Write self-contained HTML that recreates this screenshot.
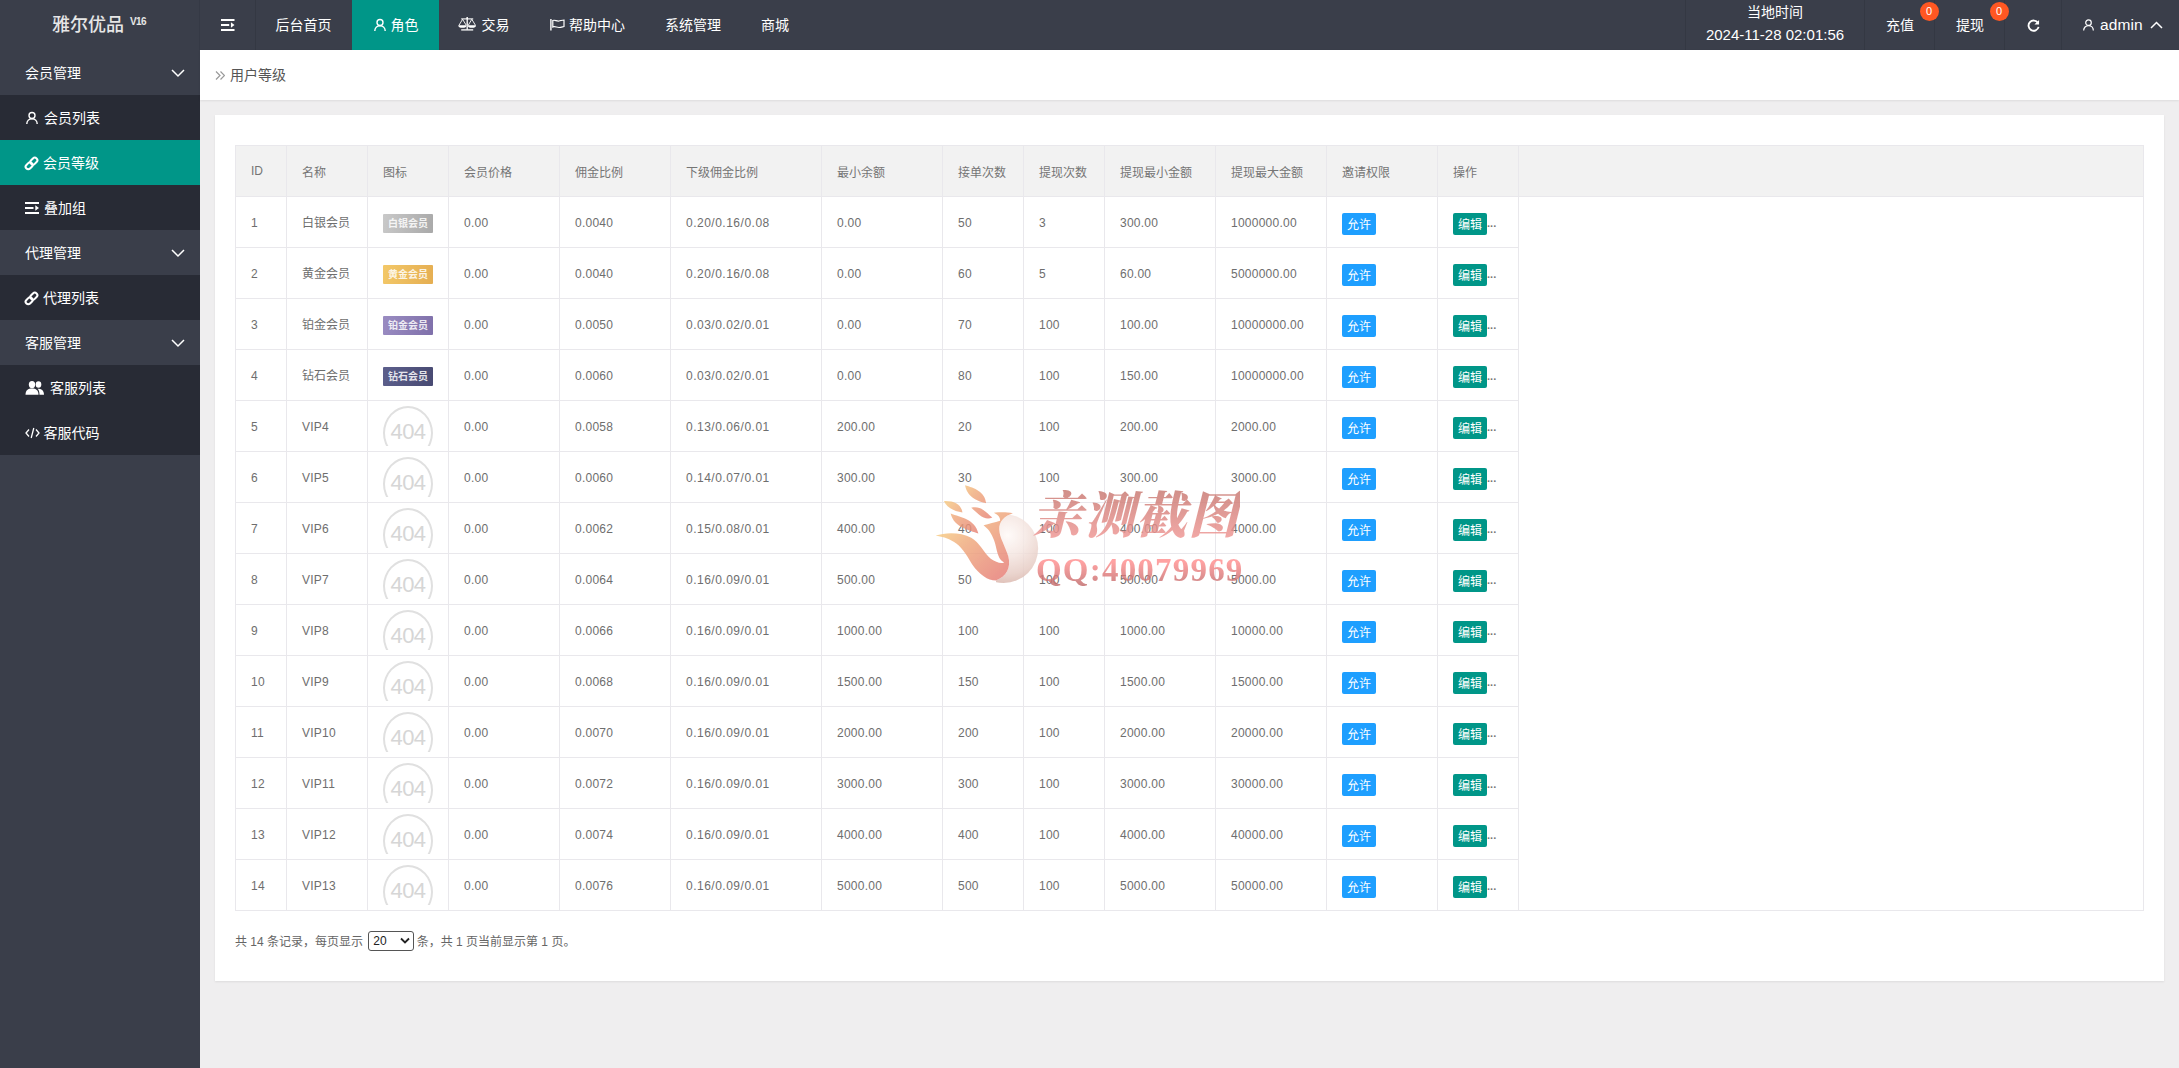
<!DOCTYPE html>
<html lang="zh-CN">
<head>
<meta charset="utf-8">
<title>用户等级</title>
<style>
*{box-sizing:border-box;margin:0;padding:0}
html,body{width:2179px;height:1068px;overflow:hidden}
body{font-family:"Liberation Sans","Noto Sans CJK SC",sans-serif;font-size:14px;color:#333;background:#efeeef;position:relative}
.header{position:absolute;left:0;top:0;width:2179px;height:50px;background:#3a3e4a;color:#fff}
.logo{position:absolute;left:0;top:0;width:200px;height:50px;line-height:51px;text-align:left;padding-left:52px;font-size:18px;font-weight:500;color:#e6e6e6;border-right:1px solid #353945;white-space:nowrap}
.logo sup{font-size:10px;position:relative;top:-6.500px;left:6px;vertical-align:baseline;font-weight:bold;letter-spacing:-0.6px}
.nav{position:absolute;top:0;height:50px;line-height:50px;text-align:center;color:#fff;font-size:14px;white-space:nowrap}
.nav.act{background:#009688}
.nav svg{vertical-align:middle;position:relative;top:-1px}
.sep{position:absolute;top:0;width:1px;height:50px;background:#343843}
.side{position:absolute;left:0;top:50px;width:200px;height:1018px;background:#3a3e4a}
.mi{position:relative;height:45px;line-height:47px;color:#fff;font-size:14px;padding-left:25px;white-space:nowrap}
.mi.sub{background:#282b35}
.mi.act{background:#009688}
.mi svg{vertical-align:middle;position:relative;top:-1px;margin-right:5px}
.mi .arr{position:absolute;right:15px;top:19px;margin:0}
.crumb{position:absolute;left:200px;top:50px;width:1979px;height:50px;background:#fff;line-height:50px;padding-left:30px;font-size:14px;color:#555;box-shadow:0 1px 2px rgba(0,0,0,.08)}
.crumb svg{position:absolute;left:15px;top:21px}
.card{position:absolute;left:215px;top:115px;width:1949px;height:866px;background:#fff;box-shadow:0 1px 2px rgba(0,0,0,.08)}
table{position:absolute;left:20px;top:30px;width:1909px;border-collapse:collapse;table-layout:fixed;font-size:12px;color:#6e6e6e}
th,td{height:51px;border:1px solid #e9e8ec;padding:0 15px;text-align:left;font-weight:normal;white-space:nowrap;overflow:hidden}
thead th{background:#f2f2f2;color:#757575}
td{padding-top:2px;letter-spacing:.25px}
td.sl{letter-spacing:.5px}
td.nm{padding-top:0;padding-bottom:1px;letter-spacing:0}
td.ic{padding:0 0 0 14px}
td.ic .bd{left:1px}
td.bt{padding:0 0 0 15px;letter-spacing:0}
td.last{border-top:0;border-bottom:0}
tbody tr:last-child td.last{border-bottom:1px solid #e9e8ec}
.bd{display:inline-block;width:50px;height:19px;line-height:19px;text-align:center;font-size:10px;color:rgba(255,255,255,.85);border-radius:1px;vertical-align:middle;position:relative;top:1px;font-weight:bold;letter-spacing:0}
.b1{background:linear-gradient(100deg,#c9c9c9,#a9a9a9)}
.b2{background:linear-gradient(100deg,#f3c868,#e5ae52)}
.b3{background:linear-gradient(100deg,#9a8cc2,#7f70aa)}
.b4{background:linear-gradient(100deg,#5c5f8c,#484a72)}
.btn{display:inline-block;height:22px;line-height:24px;padding:0 5px;font-size:12px;color:#fff;border-radius:2px;vertical-align:middle;position:relative;top:2px}
.btn.blue{background:#1e9fff}
.btn.green{background:#009688}
.dots{color:#777;position:relative;top:2px;left:0;font-size:11px;letter-spacing:0;font-weight:bold}
.e404{display:block;width:52px;height:50px;position:relative}
.e404 b{position:absolute;left:0;top:5px;width:52px;height:40px;overflow:hidden;display:block;font-weight:normal}
.e404 b:before{content:"";box-sizing:border-box;position:absolute;left:1px;top:0;width:50px;height:54px;border:2px solid #e0e0e0;border-radius:50%}
.e404 i{position:absolute;left:1px;top:11px;width:50px;text-align:center;font-style:normal;font-size:22px;color:#d6d6d6;line-height:30px;letter-spacing:-0.5px}
.pager{position:absolute;left:20px;top:816px;font-size:12px;color:#666;height:22px;line-height:22px;white-space:nowrap}
.sel{display:inline-block;vertical-align:middle;width:46px;height:20px;border:1px solid #555;border-radius:3px;background:#fff;color:#222;line-height:18px;padding-left:4px;position:relative;font-size:12px;margin:0 -1px 0 2px;top:-2px}
.sel svg{position:absolute;right:3px;top:5px}
.wm{position:absolute;left:920px;top:470px;width:350px;height:130px;opacity:.82;pointer-events:none}
.wm1{position:absolute;left:112px;top:16px;font-family:"Liberation Serif","Noto Serif CJK SC",serif;font-weight:900;font-style:italic;font-size:50px;line-height:60px;letter-spacing:2px;white-space:nowrap;background:linear-gradient(#c4746c,#f59a98);-webkit-background-clip:text;background-clip:text;color:transparent}
.wm2{position:absolute;left:116px;top:80px;font-family:"Liberation Serif",serif;font-weight:bold;font-size:33px;line-height:40px;letter-spacing:1.200px;white-space:nowrap;background:linear-gradient(#ff8e8e 30%,#c06a6a 90%);-webkit-background-clip:text;background-clip:text;color:transparent}
</style>
</head>
<body>
<div class="header">
  <div class="logo">雅尔优品<sup>V16</sup></div>
  <div class="nav" style="left:200.500px;width:55px"><svg width="13.500" height="12" viewBox="0 0 14 12" preserveAspectRatio="none"><path d="M0 1h14M0 6h8.500M0 11h14" stroke="#fff" stroke-width="2" fill="none"/><path d="M10.300 3.300l3.700 2.700-3.700 2.700z" fill="#fff"/></svg></div>
  <div class="sep" style="left:255px"></div>
  <div class="nav" style="left:255px;width:97px">后台首页</div>
  <div class="nav act" style="left:352px;width:87px"><svg width="14" height="14" viewBox="0 0 14 14"><circle cx="7" cy="4.5" r="3" stroke="#fff" stroke-width="1.4" fill="none"/><path d="M1.8 13c0-3.2 2.2-5.3 5.2-5.3s5.2 2.100 5.200 5.300" stroke="#fff" stroke-width="1.4" fill="none"/></svg> 角色</div>
  <div class="nav" style="left:439px;width:91px"><svg width="18" height="14" viewBox="0 0 18 14" style="left:-1.500px;top:-2px"><g stroke="#fff" fill="none"><path d="M9.200 0.800V12.800" stroke-width="1.300"/><path d="M3.200 1.900H15.200" stroke-width="1.100"/><path d="M3.200 12.900H15.200" stroke-width="1.300"/><path d="M1 8.200L4.600 2.300L8.200 8.200M10.300 8.200L13.800 2.300L17.400 8.200" stroke-width="0.900"/></g><circle cx="9.200" cy="0.900" r="0.900" fill="#fff"/><path d="M0.300 8.200H8.500A4.100 2.600 0 0 1 0.300 8.200zM9.800 8.200H18A4.100 2.600 0 0 1 9.800 8.200z" fill="#fff"/></svg> 交易</div>
  <div class="nav" style="left:530px;width:115px"><svg width="15" height="12" viewBox="0 0 15 12" style="top:-1.500px"><g stroke="#fff" fill="none"><path d="M0.900 0V11.500" stroke-width="1.400"/><path d="M2.800 1.500C5 0.500 6.500 2.500 9 2C11 1.600 12.500 1 14 1V7.500C12 8 11 8.500 9 8.500C6.500 8.500 5 7 2.800 8Z" stroke-width="1.200"/></g></svg> 帮助中心</div>
  <div class="nav" style="left:645px;width:96px">系统管理</div>
  <div class="nav" style="left:741px;width:68px">商城</div>

  <div class="sep" style="left:1685px"></div>
  <div class="nav" style="left:1686px;width:178px;line-height:20px;padding-top:2px;font-size:14px">当地时间<br><span style="font-size:15px;position:relative;top:3px">2024-11-28 02:01:56</span></div>
  <div class="sep" style="left:1864px"></div>
  <div class="nav" style="left:1865px;width:70px">充值</div>
  <div class="sep" style="left:1934px"></div>
  <div class="nav" style="left:1935px;width:70px">提现</div>
  <div class="sep" style="left:2004px"></div>
  <div class="nav" style="left:2005px;width:56px"><svg width="13" height="13" viewBox="0 0 14 14"><path d="M11.800 4.200A5.500 5.500 0 1 0 12.500 8.500" stroke="#fff" stroke-width="2" fill="none"/><path d="M13 1v5h-5z" fill="#fff"/></svg></div>
  <div class="sep" style="left:2061px"></div>
  <div class="nav" style="left:2062px;width:117px;text-align:left;padding-left:20px"><svg width="13" height="14" viewBox="0 0 14 14"><circle cx="7" cy="4.500" r="3" stroke="#fff" stroke-width="1.300" fill="none"/><path d="M1.800 13c0-3.200 2.200-5.300 5.200-5.300s5.200 2.100 5.200 5.300" stroke="#fff" stroke-width="1.300" fill="none"/></svg><span style="font-size:15.500px;margin-left:5px;letter-spacing:.1px">admin</span><svg width="13" height="8" viewBox="0 0 13 8" style="margin-left:7px"><path d="M1 7l5.500-5.500L12 7" stroke="#fff" stroke-width="1.500" fill="none"/></svg></div>
  <div style="position:absolute;left:1919.500px;top:2px;width:19px;height:19px;border-radius:10px;background:#ff5722;color:#fff;font-size:11px;line-height:19px;text-align:center">0</div>
  <div style="position:absolute;left:1989.500px;top:2px;width:19px;height:19px;border-radius:10px;background:#ff5722;color:#fff;font-size:11px;line-height:19px;text-align:center">0</div>
</div>

<div class="side">
  <div class="mi">会员管理<svg class="arr" width="14" height="9" viewBox="0 0 14 9"><path d="M1 1l6 6 6-6" stroke="#fff" stroke-width="1.500" fill="none"/></svg></div>
  <div class="mi sub"><svg width="14" height="14" viewBox="0 0 14 14"><circle cx="7" cy="4.500" r="3" stroke="#fff" stroke-width="1.400" fill="none"/><path d="M1.800 13c0-3.200 2.200-5.300 5.200-5.300s5.200 2.100 5.200 5.300" stroke="#fff" stroke-width="1.400" fill="none"/></svg>会员列表</div>
  <div class="mi sub act"><svg width="15" height="15" viewBox="0 0 14 14" style="margin-left:-1px;margin-right:4px"><g transform="rotate(-45 7 7)" stroke="#fff" stroke-width="1.900" fill="none"><rect x="0.300" y="4.600" width="7.200" height="4.800" rx="2.400"/><rect x="6.500" y="4.600" width="7.200" height="4.800" rx="2.400"/></g></svg>会员等级</div>
  <div class="mi sub"><svg width="14" height="12" viewBox="0 0 14 12"><path d="M0 1h14M0 6h8.500M0 11h14" stroke="#fff" stroke-width="2.200" fill="none"/><path d="M10.300 3.300l3.700 2.700-3.700 2.700z" fill="#fff"/></svg>叠加组</div>
  <div class="mi">代理管理<svg class="arr" width="14" height="9" viewBox="0 0 14 9"><path d="M1 1l6 6 6-6" stroke="#fff" stroke-width="1.500" fill="none"/></svg></div>
  <div class="mi sub"><svg width="15" height="15" viewBox="0 0 14 14" style="margin-left:-1px;margin-right:4px"><g transform="rotate(-45 7 7)" stroke="#fff" stroke-width="1.900" fill="none"><rect x="0.300" y="4.600" width="7.200" height="4.800" rx="2.400"/><rect x="6.500" y="4.600" width="7.200" height="4.800" rx="2.400"/></g></svg>代理列表</div>
  <div class="mi">客服管理<svg class="arr" width="14" height="9" viewBox="0 0 14 9"><path d="M1 1l6 6 6-6" stroke="#fff" stroke-width="1.500" fill="none"/></svg></div>
  <div class="mi sub"><svg width="20" height="16" viewBox="0 0 20 14" preserveAspectRatio="none"><circle cx="7" cy="4" r="3.200" fill="#fff"/><path d="M0.500 13c0-4 2.500-5.500 6.500-5.500s6.500 1.500 6.500 5.500z" fill="#fff"/><circle cx="13.500" cy="4" r="2.800" fill="#fff"/><path d="M14.500 13c0-3-1-4.500-2-5.300 4 0 6.500 1.300 6.500 5.300z" fill="#fff"/></svg>客服列表</div>
  <div class="mi sub"><svg width="15" height="12" viewBox="0 0 15 12" style="margin-right:3.500px"><path d="M4 2.500L1 6l3 3.500M11 2.500L14 6l-3 3.500M8.800 1L6.200 11" stroke="#fff" stroke-width="1.300" fill="none"/></svg>客服代码</div>
</div>

<div class="crumb"><svg width="10" height="9" viewBox="0 0 10 9"><path d="M1 0.500l4 4-4 4M5.500 0.500l4 4-4 4" stroke="#999" stroke-width="1.200" fill="none"/></svg>用户等级</div>

<div class="card">
<table>
<colgroup><col style="width:51px"><col style="width:81px"><col style="width:81px"><col style="width:111px"><col style="width:111px"><col style="width:151px"><col style="width:121px"><col style="width:81px"><col style="width:81px"><col style="width:111px"><col style="width:111px"><col style="width:111px"><col style="width:81px"><col></colgroup>
<thead><tr><th>ID</th><th>名称</th><th>图标</th><th>会员价格</th><th>佣金比例</th><th>下级佣金比例</th><th>最小余额</th><th>接单次数</th><th>提现次数</th><th>提现最小金额</th><th>提现最大金额</th><th>邀请权限</th><th>操作</th><th class="last"></th></tr></thead>
<tbody>
<tr><td>1</td><td class="nm">白银会员</td><td class="ic"><span class="bd b1">白银会员</span></td><td>0.00</td><td>0.0040</td><td class="sl">0.20/0.16/0.08</td><td>0.00</td><td>50</td><td>3</td><td>300.00</td><td>1000000.00</td><td class="bt"><span class="btn blue">允许</span></td><td class="bt"><span class="btn green">编辑</span><span class="dots">...</span></td><td class="last"></td></tr>
<tr><td>2</td><td class="nm">黄金会员</td><td class="ic"><span class="bd b2">黄金会员</span></td><td>0.00</td><td>0.0040</td><td class="sl">0.20/0.16/0.08</td><td>0.00</td><td>60</td><td>5</td><td>60.00</td><td>5000000.00</td><td class="bt"><span class="btn blue">允许</span></td><td class="bt"><span class="btn green">编辑</span><span class="dots">...</span></td><td class="last"></td></tr>
<tr><td>3</td><td class="nm">铂金会员</td><td class="ic"><span class="bd b3">铂金会员</span></td><td>0.00</td><td>0.0050</td><td class="sl">0.03/0.02/0.01</td><td>0.00</td><td>70</td><td>100</td><td>100.00</td><td>10000000.00</td><td class="bt"><span class="btn blue">允许</span></td><td class="bt"><span class="btn green">编辑</span><span class="dots">...</span></td><td class="last"></td></tr>
<tr><td>4</td><td class="nm">钻石会员</td><td class="ic"><span class="bd b4">钻石会员</span></td><td>0.00</td><td>0.0060</td><td class="sl">0.03/0.02/0.01</td><td>0.00</td><td>80</td><td>100</td><td>150.00</td><td>10000000.00</td><td class="bt"><span class="btn blue">允许</span></td><td class="bt"><span class="btn green">编辑</span><span class="dots">...</span></td><td class="last"></td></tr>
<tr><td>5</td><td>VIP4</td><td class="ic"><span class="e404"><b><i>404</i></b></span></td><td>0.00</td><td>0.0058</td><td class="sl">0.13/0.06/0.01</td><td>200.00</td><td>20</td><td>100</td><td>200.00</td><td>2000.00</td><td class="bt"><span class="btn blue">允许</span></td><td class="bt"><span class="btn green">编辑</span><span class="dots">...</span></td><td class="last"></td></tr>
<tr><td>6</td><td>VIP5</td><td class="ic"><span class="e404"><b><i>404</i></b></span></td><td>0.00</td><td>0.0060</td><td class="sl">0.14/0.07/0.01</td><td>300.00</td><td>30</td><td>100</td><td>300.00</td><td>3000.00</td><td class="bt"><span class="btn blue">允许</span></td><td class="bt"><span class="btn green">编辑</span><span class="dots">...</span></td><td class="last"></td></tr>
<tr><td>7</td><td>VIP6</td><td class="ic"><span class="e404"><b><i>404</i></b></span></td><td>0.00</td><td>0.0062</td><td class="sl">0.15/0.08/0.01</td><td>400.00</td><td>40</td><td>100</td><td>400.00</td><td>4000.00</td><td class="bt"><span class="btn blue">允许</span></td><td class="bt"><span class="btn green">编辑</span><span class="dots">...</span></td><td class="last"></td></tr>
<tr><td>8</td><td>VIP7</td><td class="ic"><span class="e404"><b><i>404</i></b></span></td><td>0.00</td><td>0.0064</td><td class="sl">0.16/0.09/0.01</td><td>500.00</td><td>50</td><td>100</td><td>500.00</td><td>5000.00</td><td class="bt"><span class="btn blue">允许</span></td><td class="bt"><span class="btn green">编辑</span><span class="dots">...</span></td><td class="last"></td></tr>
<tr><td>9</td><td>VIP8</td><td class="ic"><span class="e404"><b><i>404</i></b></span></td><td>0.00</td><td>0.0066</td><td class="sl">0.16/0.09/0.01</td><td>1000.00</td><td>100</td><td>100</td><td>1000.00</td><td>10000.00</td><td class="bt"><span class="btn blue">允许</span></td><td class="bt"><span class="btn green">编辑</span><span class="dots">...</span></td><td class="last"></td></tr>
<tr><td>10</td><td>VIP9</td><td class="ic"><span class="e404"><b><i>404</i></b></span></td><td>0.00</td><td>0.0068</td><td class="sl">0.16/0.09/0.01</td><td>1500.00</td><td>150</td><td>100</td><td>1500.00</td><td>15000.00</td><td class="bt"><span class="btn blue">允许</span></td><td class="bt"><span class="btn green">编辑</span><span class="dots">...</span></td><td class="last"></td></tr>
<tr><td>11</td><td>VIP10</td><td class="ic"><span class="e404"><b><i>404</i></b></span></td><td>0.00</td><td>0.0070</td><td class="sl">0.16/0.09/0.01</td><td>2000.00</td><td>200</td><td>100</td><td>2000.00</td><td>20000.00</td><td class="bt"><span class="btn blue">允许</span></td><td class="bt"><span class="btn green">编辑</span><span class="dots">...</span></td><td class="last"></td></tr>
<tr><td>12</td><td>VIP11</td><td class="ic"><span class="e404"><b><i>404</i></b></span></td><td>0.00</td><td>0.0072</td><td class="sl">0.16/0.09/0.01</td><td>3000.00</td><td>300</td><td>100</td><td>3000.00</td><td>30000.00</td><td class="bt"><span class="btn blue">允许</span></td><td class="bt"><span class="btn green">编辑</span><span class="dots">...</span></td><td class="last"></td></tr>
<tr><td>13</td><td>VIP12</td><td class="ic"><span class="e404"><b><i>404</i></b></span></td><td>0.00</td><td>0.0074</td><td class="sl">0.16/0.09/0.01</td><td>4000.00</td><td>400</td><td>100</td><td>4000.00</td><td>40000.00</td><td class="bt"><span class="btn blue">允许</span></td><td class="bt"><span class="btn green">编辑</span><span class="dots">...</span></td><td class="last"></td></tr>
<tr><td>14</td><td>VIP13</td><td class="ic"><span class="e404"><b><i>404</i></b></span></td><td>0.00</td><td>0.0076</td><td class="sl">0.16/0.09/0.01</td><td>5000.00</td><td>500</td><td>100</td><td>5000.00</td><td>50000.00</td><td class="bt"><span class="btn blue">允许</span></td><td class="bt"><span class="btn green">编辑</span><span class="dots">...</span></td><td class="last"></td></tr>
</tbody>
</table>
<div class="pager">共 14 条记录，每页显示 <span class="sel">20<svg width="10" height="8" viewBox="0 0 10 8"><path d="M1 1.500l4 4 4-4" stroke="#222" stroke-width="1.800" fill="none"/></svg></span> 条，共 1 页当前显示第 1 页。</div>
</div>

<div class="wm">
<svg width="120" height="110" viewBox="0 0 1165 1068" style="position:absolute;left:10px;top:10px">
<defs>
<radialGradient id="ball" cx="0.560" cy="0.310" r="0.700"><stop offset="0" stop-color="#fffaf8"/><stop offset="0.4" stop-color="#f5e6e1"/><stop offset="0.8" stop-color="#e6cbc3"/><stop offset="1" stop-color="#d9b5ab"/></radialGradient>
<linearGradient id="fl" x1="0.050" y1="0.100" x2="0.900" y2="0.900"><stop offset="0" stop-color="#fad884"/><stop offset="0.400" stop-color="#f0ab7c"/><stop offset="1" stop-color="#e67c74"/></linearGradient>
<clipPath id="bc"><path d="M805,322C720,350 670,400 672,480C675,560 730,640 760,740C790,850 740,940 640,975L640,1040L1100,1040L1100,300Z"/></clipPath>
</defs>
<circle cx="715" cy="665" r="335" fill="url(#ball)" clip-path="url(#bc)"/>
<path d="M55,540C150,505 300,505 400,560C480,605 520,700 590,765C640,800 690,815 720,800C680,780 660,740 645,670C630,590 600,520 560,475L520,440C570,425 630,410 680,395C685,370 665,340 620,318C680,312 750,312 805,322C720,350 670,400 672,480C675,560 730,640 760,740C790,850 740,940 640,975C560,975 480,920 410,820C350,720 300,640 230,600C170,565 110,550 55,540Z" fill="url(#fl)"/>
<path d="M340,50C430,75 535,115 545,225C470,205 365,175 340,50ZM135,205C235,200 305,240 315,315C240,305 160,270 135,205ZM400,270C495,245 550,320 605,365C525,400 465,325 400,270ZM200,325C300,365 435,375 470,520C385,485 235,465 200,325Z" fill="url(#fl)"/>
</svg>
<div class="wm1">亲测截图</div>
<div class="wm2">QQ:40079969</div>
</div>
</body>
</html>
